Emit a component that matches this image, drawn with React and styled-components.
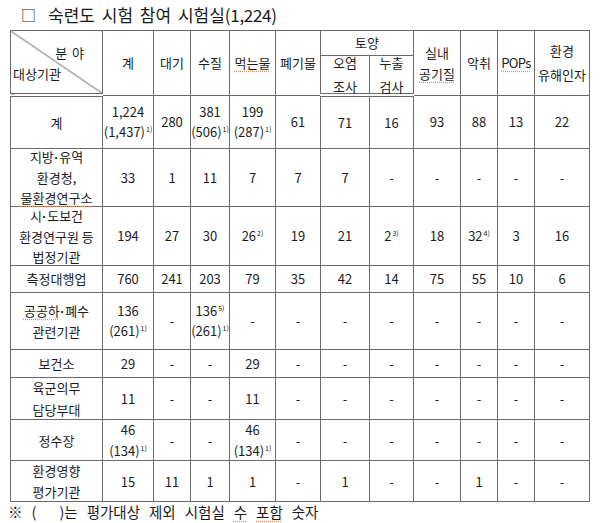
import styled, { createGlobalStyle } from "styled-components";

const GlobalStyle = createGlobalStyle`
  html, body {
    margin: 0;
    padding: 0;
    background: #ffffff;
  }
  body {
    font-family: "Noto Sans CJK KR", "Noto Sans", sans-serif;
    color: #1c1c1c;
  }
`;

const LINE = "#6a6a6a";

const colWidths = [92, 51, 37, 39, 46, 45, 49, 44, 47, 37, 37, 55];

const buildRows = () => [
  {
    h: 51,
    label: ["계"],
    cells: [
      ["1,224", ["(1,437)", "1)"]],
      ["280"],
      ["381", ["(506)", "1)"]],
      ["199", ["(287)", "1)"]],
      ["61"],
      ["71"],
      ["16"],
      ["93"],
      ["88"],
      ["13"],
      ["22"],
    ],
    lh: 20,
  },
  {
    h: 57,
    label: [
      <span key="a">
        지방<Dot>·</Dot>유역
      </span>,
      "환경청,",
      <Squiggle key="s">물환경연구소</Squiggle>,
    ],
    cells: [["33"], ["1"], ["11"], ["7"], ["7"], ["7"], ["-"], ["-"], ["-"], ["-"], ["-"]],
    lh: 20,
  },
  {
    h: 58,
    label: [
      <span key="a">
        시<Dot>·</Dot>도보건
      </span>,
      "환경연구원 등",
      "법정기관",
    ],
    cells: [
      ["194"],
      ["27"],
      ["30"],
      [["26", "2)"]],
      ["19"],
      ["21"],
      [["2", "3)"]],
      ["18"],
      [["32", "4)"]],
      ["3"],
      ["16"],
    ],
    lh: 20,
  },
  {
    h: 26,
    label: ["측정대행업"],
    cells: [["760"], ["241"], ["203"], ["79"], ["35"], ["42"], ["14"], ["75"], ["55"], ["10"], ["6"]],
  },
  {
    h: 56,
    label: [
      <span key="a">
        <Squiggle>공공하</Squiggle>
        <Dot>·</Dot>폐수
      </span>,
      "관련기관",
    ],
    cells: [
      ["136", ["(261)", "1)"]],
      ["-"],
      [["136", "5)"], ["(261)", "1)"]],
      ["-"],
      ["-"],
      ["-"],
      ["-"],
      ["-"],
      ["-"],
      ["-"],
      ["-"],
    ],
    lh: 20,
  },
  {
    h: 27,
    label: ["보건소"],
    cells: [["29"], ["-"], ["-"], ["29"], ["-"], ["-"], ["-"], ["-"], ["-"], ["-"], ["-"]],
  },
  {
    h: 41,
    label: ["육군의무", "담당부대"],
    cells: [["11"], ["-"], ["-"], ["11"], ["-"], ["-"], ["-"], ["-"], ["-"], ["-"], ["-"]],
    lh: 22,
  },
  {
    h: 40,
    label: ["정수장"],
    cells: [
      ["46", ["(134)", "1)"]],
      ["-"],
      ["-"],
      ["46", ["(134)", "1)"]],
      ["-"],
      ["-"],
      ["-"],
      ["-"],
      ["-"],
      ["-"],
      ["-"],
    ],
    lh: 21,
  },
  {
    h: 40,
    label: ["환경영향", "평가기관"],
    cells: [["15"], ["11"], ["1"], ["1"], ["-"], ["1"], ["-"], ["-"], ["1"], ["-"], ["-"]],
    lh: 21,
  },
];

function Line({ part }) {
  if (Array.isArray(part)) {
    return (
      <span>
        {part[0]}
        <Sup>{part[1]}</Sup>
      </span>
    );
  }
  return <span>{part}</span>;
}

function App() {
  const rows = buildRows();
  return (
    <Page>
      <GlobalStyle />
      <Title>
        <Box14>□</Box14>
        <span>숙련도 시험 참여 시험실</span>
        <Paren>(1,224)</Paren>
      </Title>
      <Table>
        <colgroup>
          {colWidths.map((w, i) => (
            <col key={i} style={{ width: w }} />
          ))}
        </colgroup>
        <thead>
          <tr>
            <DiagCell rowSpan={2}>
              <DiagBox>
                <DiagTop>분 야</DiagTop>
                <DiagBottom>대상기관</DiagBottom>
              </DiagBox>
            </DiagCell>
            <Th rowSpan={2}>
              <Box $h={62}>계</Box>
            </Th>
            <Th rowSpan={2}>
              <Box $h={62}>대기</Box>
            </Th>
            <Th rowSpan={2}>
              <Box $h={62}>수질</Box>
            </Th>
            <Th rowSpan={2}>
              <Box $h={62}>
                <Squiggle>먹는물</Squiggle>
              </Box>
            </Th>
            <Th rowSpan={2}>
              <Box $h={62}>폐기물</Box>
            </Th>
            <Th colSpan={2}>
              <Box $h={24}>토양</Box>
            </Th>
            <Th rowSpan={2}>
              <Box $h={62} $lh={21}>
                <span>실내</span>
                <Squiggle>공기질</Squiggle>
              </Box>
            </Th>
            <Th rowSpan={2}>
              <Box $h={62}>악취</Box>
            </Th>
            <Th rowSpan={2}>
              <Box $h={62}>
                <Squiggle $tight>POPs</Squiggle>
              </Box>
            </Th>
            <Th rowSpan={2}>
              <Box $h={62} $lh={24}>
                <span>환경</span>
                <span>유해인자</span>
              </Box>
            </Th>
          </tr>
          <tr>
            <Th $double>
              <Box $h={36} $lh={24}>
                <span>오염</span>
                <span>조사</span>
              </Box>
            </Th>
            <Th $double>
              <Box $h={36} $lh={24}>
                <span>누출</span>
                <span>검사</span>
              </Box>
            </Th>
          </tr>
        </thead>
        <tbody>
          {rows.map((row, ri) => (
            <tr key={ri}>
              <Td>
                <Box $h={row.h} $lh={row.lh}>
                  {row.label.map((l, i) => (
                    <span key={i}>{l}</span>
                  ))}
                </Box>
              </Td>
              {row.cells.map((cell, ci) => (
                <Td key={ci}>
                  <Box $h={row.h} $lh={row.lh}>
                    {cell.map((part, pi) => (
                      <Line key={pi} part={part} />
                    ))}
                  </Box>
                </Td>
              ))}
            </tr>
          ))}
        </tbody>
      </Table>
      <Note>
        <span>※</span>
        <Wide>(</Wide>
        <span>)는</span>
        <span>평가대상</span>
        <span>제외</span>
        <span>시험실</span>
        <Squiggle>수</Squiggle>
        <Squiggle>포함</Squiggle>
        <span>숫자</span>
      </Note>
    </Page>
  );
}

const Page = styled.div`
  width: 600px;
  height: 523px;
  overflow: hidden;
  padding-top: 1px;
  box-sizing: border-box;
`;

const Title = styled.div`
  display: flex;
  align-items: center;
  gap: 8px;
  height: 26px;
  padding-left: 21px;
  font-size: 17px;
  word-spacing: 3px;
  color: #1a1a1a;
  margin-bottom: 3px;
`;

const Box14 = styled.span`
  font-size: 15px;
  margin-right: 4px;
`;

const Paren = styled.span`
  margin-left: -8px;
  letter-spacing: -0.3px;
`;

const Table = styled.table`
  margin-left: 10px;
  border-collapse: collapse;
  table-layout: fixed;
  width: 580px;
  font-size: 13px;
  color: #1c1c1c;
`;

const Th = styled.th`
  border: 1px solid ${LINE};
  border-bottom: ${(p) => (p.$double ? `4px double ${LINE}` : `1px solid ${LINE}`)};
  padding: 0;
  font-weight: 400;
  vertical-align: middle;
`;

const DiagCell = styled.th`
  border: 1px solid ${LINE};
  border-bottom: 4px double ${LINE};
  padding: 0;
  font-weight: 400;
  background: linear-gradient(
    to top right,
    transparent calc(50% - 0.8px),
    #555555 50%,
    transparent calc(50% + 0.8px)
  );
`;

const DiagBox = styled.div`
  position: relative;
  height: 62px;
`;

const DiagTop = styled.span`
  position: absolute;
  right: 18px;
  top: 12px;
  word-spacing: 2px;
`;

const DiagBottom = styled.span`
  position: absolute;
  left: 2px;
  top: 33px;
`;

const Td = styled.td`
  border: 1px solid ${LINE};
  padding: 0;
  vertical-align: middle;
`;

const Box = styled.div`
  height: ${(p) => p.$h}px;
  display: flex;
  flex-direction: column;
  align-items: center;
  justify-content: center;
  line-height: ${(p) => (p.$lh ? `${p.$lh}px` : "20px")};
  white-space: nowrap;
  text-align: center;
`;

const Dot = styled.span`
  font-family: "Liberation Sans", sans-serif;
  font-weight: 700;
  margin: 0 0.5px;
`;

const Sup = styled.sup`
  font-size: 7px;
  line-height: 0;
  vertical-align: 0;
  position: relative;
  top: -5px;
  margin-left: 1px;
`;

const Squiggle = styled.span`
  text-decoration: underline dotted #e0905a;
  text-underline-offset: 3px;
  letter-spacing: ${(p) => (p.$tight ? "-0.6px" : "0")};
`;

const Note = styled.div`
  display: flex;
  align-items: center;
  gap: 9px;
  height: 20px;
  padding-left: 8px;
  margin-top: -1px;
  font-size: 14.5px;
  color: #1a1a1a;
`;

const Wide = styled.span`
  margin-right: 14px;
`;

export default App;
